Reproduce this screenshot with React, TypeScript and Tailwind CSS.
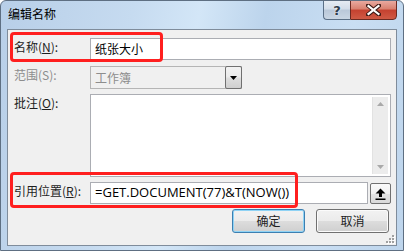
import React from "react";

const cjk = "font-['Noto_Sans_CJK_SC',sans-serif]";

function Label({ children, disabled }: { children: React.ReactNode; disabled?: boolean }) {
  return (
    <div
      className={`w-[76px] shrink-0 pt-[1px] text-[12px] leading-[16px] ${cjk} ${
        disabled ? "text-[#8d8d8d]" : "text-[#1e1e1e]"
      }`}
    >
      {children}
    </div>
  );
}

function WinButton({ children, primary }: { children: React.ReactNode; primary?: boolean }) {
  return (
    <div
      className={`w-[73px] h-[24px] rounded-[3px] border ${
        primary ? "border-[#3c7fb1] shadow-[inset_0_0_0_1px_#8fd3f5]" : "border-[#707070] shadow-[inset_0_0_0_1px_#fbfbfb]"
      } bg-[linear-gradient(to_bottom,#f2f2f2_0%,#ebebeb_50%,#dddddd_50%,#cfcfcf_100%)] flex items-center justify-center text-[12px] text-[#1e1e1e] ${cjk}`}
    >
      {children}
    </div>
  );
}

export default function App() {
  return (
    <div className="relative w-[404px] h-[251px] overflow-hidden rounded-t-[6px] border border-[#5e6f82] bg-[linear-gradient(100deg,#b8cfe8_0%,#c6dbf0_30%,#d3e6f7_45%,#bcd4ec_60%,#c9def3_80%,#bed5ec_100%)]">
      {/* title bar */}
      <div className={`h-[28px] flex items-center pl-[7px] pb-[2px] text-[12px] text-black ${cjk}`}>
        编辑名称
      </div>
      {/* caption buttons */}
      <div className="absolute top-[-1px] right-[6px] flex">
        <div className="w-[27px] h-[20px] border border-[#5a6f86] border-r-0 rounded-bl-[4px] bg-[linear-gradient(to_bottom,#e6ecf3_0%,#d3dde9_45%,#b9c8d9_50%,#c9d6e4_100%)] flex items-center justify-center">
          <span className="text-[13px] font-bold leading-none text-[#2e3b4a] font-['DejaVu_Sans',sans-serif] [text-shadow:0_0_2px_#ffffff]">?</span>
        </div>
        <div className="w-[47px] h-[20px] border border-[#6b2a22] rounded-br-[4px] bg-[linear-gradient(to_bottom,#e9a99f_0%,#d8806f_45%,#c5412f_50%,#d05a45_100%)] flex items-center justify-center">
          <svg width="15" height="12" viewBox="0 0 15 12">
            <path d="M2 1.5 L13 10.5 M13 1.5 L2 10.5" stroke="#3d1a16" strokeWidth="4.2" strokeLinecap="square" />
            <path d="M2.5 2 L12.5 10 M12.5 2 L2.5 10" stroke="#ffffff" strokeWidth="2.2" strokeLinecap="square" />
          </svg>
        </div>
      </div>

      {/* client area */}
      <div className="relative mx-[6px] h-[217px] border border-[#7f8c9b] bg-[#f0f0f0]">
        <div className="flex flex-col pt-[8px] pl-[6px] pr-[5px]">
          {/* name */}
          <div className="flex h-[22px]">
            <Label>
              名称(<span className="underline">N</span>):
            </Label>
            <div className={`flex-1 border border-[#abadb3] bg-white flex items-center pl-[4px] text-[12px] text-black ${cjk}`}>
              纸张大小
            </div>
          </div>
          {/* range */}
          <div className="flex h-[23px] mt-[6px]">
            <Label disabled>范围(S):</Label>
            <div className="w-[152px] border border-[#b5b5b5] bg-[#f0f0f0] flex items-center">
              <div className={`flex-1 pl-[4px] text-[12px] text-[#8d8d8d] ${cjk}`}>工作簿</div>
              <div className="w-[17px] h-[23px] -mr-[1px] border border-[#707070] rounded-[2px] bg-[linear-gradient(to_bottom,#f2f2f2_0%,#ebebeb_45%,#dddddd_55%,#cfcfcf_100%)] flex items-center justify-center">
                <svg width="7" height="4" viewBox="0 0 7 4">
                  <path d="M0 0 L7 0 L3.5 4 Z" fill="#000" />
                </svg>
              </div>
            </div>
          </div>
          {/* comment */}
          <div className="flex h-[83px] mt-[5px]">
            <Label>
              批注(<span className="underline">O</span>):
            </Label>
            <div className="flex-1 border border-[#abadb3] bg-white flex justify-end p-[2px]">
              <div className="w-[16px] h-full bg-[#ececec] border-l border-[#e2e2e2] flex flex-col items-center justify-between py-[5px]">
                <svg width="7" height="4" viewBox="0 0 7 4">
                  <path d="M0 4 L7 4 L3.5 0 Z" fill="#a9a9a9" />
                </svg>
                <svg width="7" height="4" viewBox="0 0 7 4">
                  <path d="M0 0 L7 0 L3.5 4 Z" fill="#a9a9a9" />
                </svg>
              </div>
            </div>
          </div>
          {/* reference */}
          <div className="flex h-[22px] mt-[5px]">
            <Label>
              引用位置(<span className="underline">R</span>):
            </Label>
            <div className={`flex-1 border border-[#abadb3] bg-white flex items-center pl-[4px] text-[13px] text-black font-['Open_Sans','Noto_Sans_CJK_SC',sans-serif]`}>
              =GET.DOCUMENT(77)&amp;T(NOW())
            </div>
            <div className="w-[21px] h-[21px] ml-[2px] mt-[1px] border border-[#707070] rounded-[2px] bg-[linear-gradient(to_bottom,#fafafa_0%,#f0f0f0_50%,#e3e3e3_50%,#d9d9d9_100%)] flex items-center justify-center">
              <svg width="11" height="12" viewBox="0 0 11 12">
                <path d="M5.5 0.5 L10.5 5.5 L7 5.5 L7 9 L4 9 L4 5.5 L0.5 5.5 Z" fill="#000" />
                <rect x="0.5" y="10.5" width="10" height="1.5" fill="#000" />
              </svg>
            </div>
          </div>
          {/* buttons */}
          <div className="flex justify-end gap-[11px] mt-[5px] pr-[2px]">
            <WinButton primary>确定</WinButton>
            <WinButton>取消</WinButton>
          </div>
        </div>

        {/* red highlight boxes */}
        <div className="absolute left-[2px] top-[2px] w-[153px] h-[30px] border-[3px] border-[#ff1f1f] rounded-[4px]" />
        <div className="absolute left-[2px] top-[142px] w-[288px] h-[36px] border-[3px] border-[#ff1f1f] rounded-[4px]" />

        {/* resize grip */}
        <svg className="absolute right-[1px] bottom-[1px]" width="11" height="11" viewBox="0 0 11 11">
          {[
            [8, 2], [8, 5], [5, 5], [8, 8], [5, 8], [2, 8],
          ].map(([x, y], i) => (
            <g key={i}>
              <rect x={x + 1} y={y + 1} width="2" height="2" fill="#ffffff" />
              <rect x={x} y={y} width="2" height="2" fill="#a0a0a0" />
            </g>
          ))}
        </svg>
      </div>
    </div>
  );
}
